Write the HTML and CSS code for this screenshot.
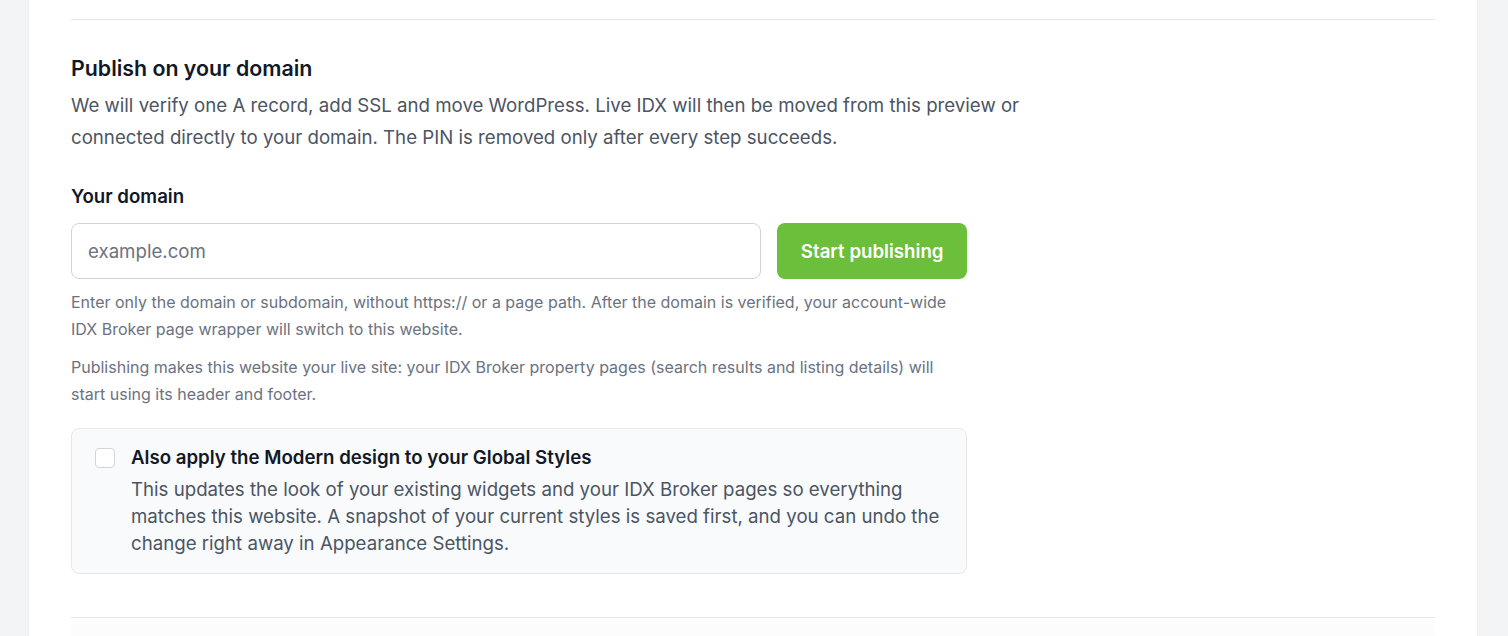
FILE: index.html
```html
<!DOCTYPE html>
<html lang="en">
<head>
<meta charset="utf-8">
<title>Publish on your domain</title>
<link rel="stylesheet" href="styles.css">
</head>
<body>
<div class="page">
  <main class="card">
    <section class="section">
      <h2 class="section-title">Publish on your domain</h2>
      <p class="section-desc">We will verify one A record, add SSL and move WordPress. Live IDX will then be moved from this preview or connected directly to your domain. The PIN is removed only after every step succeeds.</p>

      <form class="publish-form" onsubmit="return false">
        <label class="field-label" for="domain">Your domain</label>
        <div class="field-row">
          <input class="text-input" id="domain" type="text" placeholder="example.com">
          <button class="btn-primary" type="submit">Start publishing</button>
        </div>
        <p class="help">Enter only the domain or subdomain, without https:// or a page path. After the domain is verified, your account-wide IDX Broker page wrapper will switch to this website.</p>
        <p class="help">Publishing makes this website your live site: your IDX Broker property pages (search results and listing details) will start using its header and footer.</p>

        <label class="option-card">
          <input class="checkbox" type="checkbox">
          <span class="option-text">
            <span class="option-title">Also apply the Modern design to your Global Styles</span>
            <span class="option-desc">This updates the look of your existing widgets and your IDX Broker pages so everything matches this website. A snapshot of your current styles is saved first, and you can undo the change right away in Appearance Settings.</span>
          </span>
        </label>
      </form>
    </section>
    <div class="footer-zone"></div>
  </main>
</div>
</body>
</html>
```

FILE: styles.css
```css
* { box-sizing: border-box; }

html, body {
  margin: 0;
  padding: 0;
  background: #f3f4f6;
  font-family: Inter, "Noto Sans", "Liberation Sans", sans-serif;
  color: #111827;
  -webkit-font-smoothing: antialiased;
}

.page {
  padding: 0 31px 0 29px;
  height: 636px;
  overflow: hidden;
}

.card {
  background: #ffffff;
  min-height: 700px;
  padding: 19px 42px 0;
  box-shadow: 0 0 3px rgba(0, 0, 0, 0.05);
}

.section {
  border-top: 1px solid #e5e7eb;
  border-bottom: 1px solid #e5e7eb;
  padding: 34px 0 43px;
}

.section-title {
  margin: 0;
  font-size: 21.33px;
  line-height: 28px;
  font-weight: 600;
  color: #111827;
}

.section-desc {
  margin: 8px 0 0;
  max-width: 960px;
  font-size: 18.67px;
  line-height: 32px;
  color: #4b5563;
}

.publish-form {
  margin-top: 29px;
  max-width: 896px;
}

.field-label {
  display: block;
  font-size: 18.67px;
  line-height: 28px;
  font-weight: 600;
  color: #111827;
}

.field-row {
  display: flex;
  gap: 16px;
  margin-top: 12px;
}

.text-input {
  flex: 1;
  min-width: 0;
  height: 56px;
  padding: 0 16px;
  border: 1px solid #d1d5db;
  border-radius: 8px;
  background: #fff;
  font-family: inherit;
  font-size: 18.67px;
  color: #111827;
  outline: none;
}

.text-input::placeholder {
  color: #6b7280;
}

.btn-primary {
  height: 56px;
  padding: 0 23.5px;
  border: 0;
  border-radius: 8px;
  background: #6bbf3a;
  color: #ffffff;
  font-family: inherit;
  font-size: 18.67px;
  font-weight: 600;
  cursor: pointer;
}

.help {
  margin: 10px 0 0;
  font-size: 16px;
  line-height: 27px;
  color: #6b7280;
}

.help + .help {
  margin-top: 11px;
}

.option-card {
  display: flex;
  gap: 16px;
  margin-top: 20px;
  padding: 15px 23px 16px;
  background: #f9fafb;
  border: 1px solid #e5e7eb;
  border-radius: 8px;
  cursor: pointer;
}

.checkbox {
  appearance: none;
  -webkit-appearance: none;
  flex: none;
  width: 20px;
  height: 20px;
  margin: 4px 0 0;
  border: 1px solid #d1d5db;
  border-radius: 4px;
  background: #ffffff;
}

.option-text {
  display: flex;
  flex-direction: column;
  gap: 5px;
}

.option-title {
  font-size: 18.67px;
  line-height: 27px;
  font-weight: 600;
  color: #111827;
}

.option-desc {
  font-size: 18.67px;
  line-height: 27px;
  color: #4b5563;
}

.footer-zone {
  height: 80px;
  background: linear-gradient(#fdfdfd, #fafafa);
}
```
